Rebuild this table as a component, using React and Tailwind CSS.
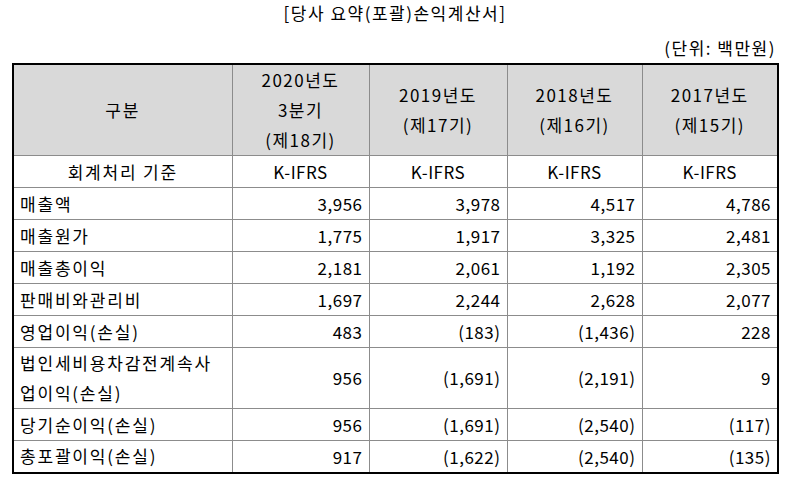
const rows = [
  { label: '매출액', values: ['3,956', '3,978', '4,517', '4,786'] },
  { label: '매출원가', values: ['1,775', '1,917', '3,325', '2,481'] },
  { label: '매출총이익', values: ['2,181', '2,061', '1,192', '2,305'] },
  { label: '판매비와관리비', values: ['1,697', '2,244', '2,628', '2,077'] },
  { label: '영업이익(손실)', values: ['483', '(183)', '(1,436)', '228'] },
  { label: ['법인세비용차감전계속사', '업이익(손실)'], values: ['956', '(1,691)', '(2,191)', '9'], tall: true },
  { label: '당기순이익(손실)', values: ['956', '(1,691)', '(2,540)', '(117)'] },
  { label: '총포괄이익(손실)', values: ['917', '(1,622)', '(2,540)', '(135)'] },
];

const headers = [
  ['2020년도', '3분기', '(제18기)'],
  ['2019년도', '(제17기)'],
  ['2018년도', '(제16기)'],
  ['2017년도', '(제15기)'],
];

const cell = 'border border-[#8c8c8c] px-[6px]';

export default function App() {
  return (
    <div
      className="w-[790px] h-[481px] bg-white text-black text-[17px] tracking-[0.5px] overflow-hidden"
      style={{ fontFamily: '"Noto Sans CJK KR", "Noto Sans", sans-serif' }}
    >
      <div className="text-center leading-[24px] pt-[1px] tracking-[1.5px]">[당사 요약(포괄)손익계산서]</div>
      <div className="text-right leading-[24px] mt-[11px] pr-[14px] tracking-[1.5px]">(단위: 백만원)</div>
      <div className="px-[12px] mt-[3px]">
        <table className="w-[765px] border-collapse border-2 border-black table-fixed">
          <colgroup>
            <col className="w-[219px]" />
            <col className="w-[137px]" />
            <col className="w-[138px]" />
            <col className="w-[135px]" />
            <col className="w-[136px]" />
          </colgroup>
          <thead>
            <tr className="h-[90px] bg-[#d9d9d9]">
              <th className={`${cell} font-normal text-center tracking-[1.8px]`}>구분</th>
              {headers.map((lines, i) => (
                <th key={i} className={`${cell} font-normal text-center leading-[30px] tracking-[1.5px]`}>
                  {lines.map((l) => (
                    <div key={l}>{l}</div>
                  ))}
                </th>
              ))}
            </tr>
          </thead>
          <tbody>
            <tr className="h-[32px]">
              <td className={`${cell} text-center tracking-[1.8px]`}>회계처리 기준</td>
              {headers.map((_, i) => (
                <td key={i} className={`${cell} text-center`}>K-IFRS</td>
              ))}
            </tr>
            {rows.map((r, i) => (
              <tr key={i} className={r.tall ? 'h-[61px]' : 'h-[32px]'}>
                <td className={`${cell} text-left leading-[30px] tracking-[1.8px]`}>
                  {Array.isArray(r.label) ? r.label.map((l) => <div key={l}>{l}</div>) : r.label}
                </td>
                {r.values.map((v, j) => (
                  <td key={j} className={`${cell} text-right`}>{v}</td>
                ))}
              </tr>
            ))}
          </tbody>
        </table>
      </div>
    </div>
  );
}
